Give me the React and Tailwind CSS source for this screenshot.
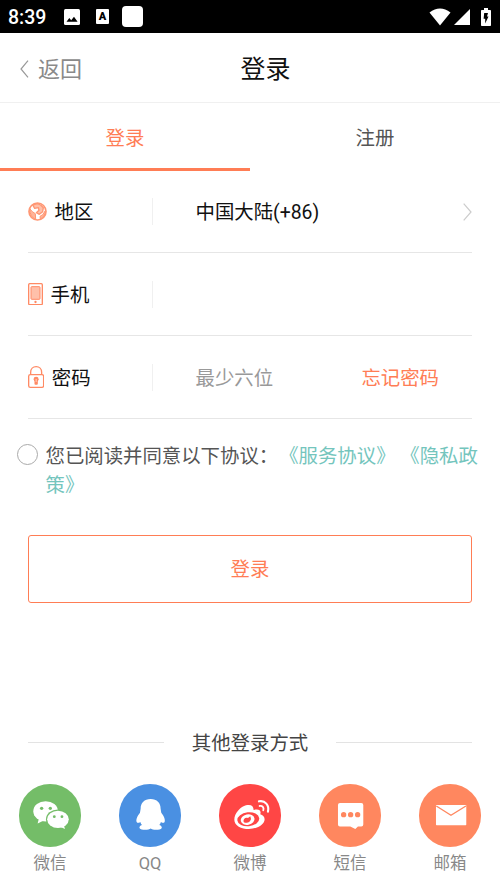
import React, { useState } from 'react';

const WechatIcon = () => (
  <svg viewBox="0 0 188 188" className="w-full h-full">
    <g fill="#fff">
      <ellipse cx="80" cy="82" rx="37" ry="30.5" />
      <path d="M60 103 L56 119 L76 109 Z" />
      <ellipse cx="117" cy="106" rx="36" ry="29.5" fill="#74bd68" />
      <ellipse cx="117" cy="106" rx="32.5" ry="26" />
      <path d="M122 128 L138 135 L134 121 Z" />
    </g>
    <g fill="#74bd68">
      <circle cx="68" cy="73" r="5" />
      <circle cx="94" cy="73" r="5" />
      <circle cx="106" cy="98" r="4.2" />
      <circle cx="129" cy="98" r="4.2" />
    </g>
  </svg>
);

const QQIcon = () => (
  <svg viewBox="0 0 188 188" className="w-full h-full">
    <path
      fill="#fff"
      d="M95 45 C76 45 65 57 65 74 C65 78 63 82 63 86 C56 95 50 106 53 114 C55 118 60 117 64 114 C65 118 67 121 69 123 C63 125 60 129 62 133 C66 139 89 139 95 134 C101 139 124 139 128 133 C130 129 127 125 121 123 C123 121 125 118 126 114 C130 117 135 118 137 114 C140 106 134 95 127 86 C127 82 125 78 125 74 C125 57 114 45 95 45 Z"
    />
  </svg>
);

const WeiboIcon = () => (
  <svg viewBox="0 0 188 188" className="w-full h-full">
    <path
      fill="#fff"
      d="M81 64 C66 67 46 88 46 107 C46 125 67 135 90 135 C116 135 137 121 137 106 C137 98 131 93 124 91 C128 79 119 73 104 78 C104 66 96 60 81 64 Z"
    />
    <ellipse cx="88" cy="106" rx="33" ry="21" fill="#ff4645" transform="rotate(-6 88 106)" />
    <ellipse cx="86" cy="107" rx="21" ry="15.5" fill="#fff" transform="rotate(-12 86 107)" />
    <path d="M74 114 C72 105 79 99 87 102 L94 97 L96 104 C96 113 82 121 74 114 Z" fill="#ff4645" />
    <g fill="none" stroke="#fff" strokeWidth="6.500" strokeLinecap="round">
      <path d="M120 52 C138 48 152 64 147 83" />
      <path d="M122 66 C130 64 136 71 133 79" strokeWidth="5.500" />
    </g>
  </svg>
);

const SmsIcon = () => (
  <svg viewBox="0 0 188 188" className="w-full h-full">
    <path
      fill="#fff"
      d="M63 57 H127 Q133 57 133 63 V122 Q133 128 127 128 H117 L109 135 L94 128 H63 Q57 128 57 122 V63 Q57 57 63 57 Z"
    />
    <g fill="#ff875f">
      <circle cx="74" cy="92" r="8" />
      <circle cx="95" cy="92" r="8" />
      <circle cx="116" cy="92" r="8" />
    </g>
  </svg>
);

const MailIcon = () => (
  <svg viewBox="0 0 188 188" className="w-full h-full">
    <rect x="51" y="63" width="91" height="61" rx="2" fill="#fff" />
    <path d="M52 66 L96 94 L141 66" fill="none" stroke="#ff875f" strokeWidth="4" />
  </svg>
);

const GlobeIcon = () => (
  <svg viewBox="0 0 57 57" className="w-[19px] h-[19px] -mt-[2px]">
    <circle cx="28.5" cy="28.5" r="25.5" fill="#fff" stroke="#ff9673" strokeWidth="5" />
    <path
      fill="#ffc0aa"
      stroke="#ff9673"
      strokeWidth="4"
      strokeLinejoin="round"
      d="M14 9 L20 19 L31 17 L33 25 L25 32 L34 37 L44 29 L46 17 L38 9 L28 5 Z"
    />
    <path fill="#ffb499" stroke="#ff9673" strokeWidth="3" d="M5 20 L13 29 L22 35 L23 52 Q6 46 5 20 Z" />
    <path fill="#ffb499" stroke="#ff9673" strokeWidth="3" d="M52 26 L44 38 L36 43 L37 51 Q51 44 52 26 Z" />
  </svg>
);

const PhoneIcon = () => (
  <svg viewBox="0 0 45 67" className="w-[15px] h-[22.3px] -mt-[2px]">
    <rect x="2" y="2" width="41" height="63" rx="3" fill="#fff" stroke="#ff8a64" strokeWidth="4" />
    <rect x="9" y="11" width="27" height="38" rx="2" fill="#ffc0aa" stroke="#ff8a64" strokeWidth="3" />
    <circle cx="22.5" cy="57" r="3.5" fill="#ff8a64" />
  </svg>
);

const LockIcon = () => (
  <svg viewBox="0 0 49 67" className="w-[16.3px] h-[22.3px] -mt-[2px]">
    <g fill="none" stroke="#ff8a64" strokeWidth="4">
      <path d="M8 26 V19 C8 9 15 2 24.500 2 C34 2 41 9 41 19 V26" />
      <rect x="2" y="26" width="45" height="38" rx="5" />
    </g>
    <circle cx="24.500" cy="40" r="7.500" fill="#ff8a64" />
    <rect x="19.500" y="42" width="10" height="14" rx="3" fill="#ff8a64" />
    <path d="M24.500 39 V48" stroke="#ffd2c3" strokeWidth="3" />
  </svg>
);

const StatusBar = () => (
  <div className="flex items-center h-[33px] bg-black text-white">
    <span className="w-[46px] ml-[8px] pt-[2px] text-[19.5px] leading-none font-['Roboto'] font-medium">8:39</span>
    <svg viewBox="0 0 16 16" className="w-4 h-4 ml-[10px]">
      <rect width="16" height="16" rx="1.5" fill="#fff" />
      <path d="M2.500 12.800 L5.300 9 L7.200 11.200 L10 7.800 L13.600 12.800 Z" fill="#000" />
    </svg>
    <div className="flex justify-center w-[13px] h-[15px] ml-4 rounded-[1px] bg-white text-black text-[11px] leading-[15px] font-black font-['Roboto']">
      A
    </div>
    <div className="w-[21px] h-[21px] ml-[13px] rounded-[4px] bg-white"></div>
    <svg viewBox="0 0 22 18" className="w-[22px] h-[18px] ml-auto">
      <path d="M0.500 4.500 Q11 -3.500 21.500 4.500 L11 17.500 Z" fill="#fff" />
    </svg>
    <svg viewBox="0 0 16 16" className="w-4 h-4 ml-[3px]">
      <path d="M16 0 V16 H0 Z" fill="#fff" />
    </svg>
    <svg viewBox="0 0 10 18" className="w-[10px] h-[18px] ml-[11px] mr-[9px]">
      <path d="M3 0 H7 V2 H9.200 Q10 2 10 2.800 V17.200 Q10 18 9.200 18 H0.800 Q0 18 0 17.200 V2.800 Q0 2 0.800 2 H3 Z" fill="#fff" />
      <path d="M3.200 5 H7 L6 8.500 H7.500 L4.200 15.500 V10.800 H2.600 Z" fill="#000" />
    </svg>
  </div>
);

const FieldRow = ({ icon, label, children }) => (
  <div className="flex items-center h-[83px] pt-[2px] border-b border-[#e6e6e6]">
    <div className="flex items-center w-[124px]">
      {icon}
      <span className="ml-[7.500px] pt-[3px] text-[#111]">{label}</span>
    </div>
    <div className="w-px h-[27px] -mt-[2px] bg-[#f0f0f0]"></div>
    <div className="flex flex-1 items-center justify-between pl-[42.500px]">{children}</div>
  </div>
);

const loginWays = [
  { name: '微信', color: 'bg-[#74bd68]', icon: <WechatIcon /> },
  { name: 'QQ', color: 'bg-[#4a90e2]', icon: <QQIcon /> },
  { name: '微博', color: 'bg-[#ff4645]', icon: <WeiboIcon /> },
  { name: '短信', color: 'bg-[#ff875f]', icon: <SmsIcon /> },
  { name: '邮箱', color: 'bg-[#ff875f]', icon: <MailIcon /> },
];

const App = () => {
  const [agreed, setAgreed] = useState(false);

  return (
    <div className="flex flex-col w-[500px] h-[888px] overflow-hidden bg-white text-[19.4px] leading-[28.5px] font-['Roboto','Noto_Sans_CJK_SC',sans-serif]">
      <StatusBar />

      <header className="grid grid-cols-[240.5px_1fr] items-center h-[70px] pt-[2px] border-b border-[#f0f0f0]">
        <button className="flex items-center pl-[20px] text-[22px] text-[#8a8a8a]">
          <svg viewBox="0 0 9 18" className="w-[9px] h-[18px] mr-[9px]">
            <path d="M8 0.700 L1 9 L8 17.300" fill="none" stroke="#999" strokeWidth="1.200" />
          </svg>
          <span className="pt-[3px]">返回</span>
        </button>
        <h1 className="pt-[4px] text-[25px] text-[#111]">登录</h1>
      </header>

      <div className="grid grid-cols-2 h-[68px] text-center">
        <button className="pt-[7px] border-b-3 border-[#ff7d55] text-[#ff7d55]">登录</button>
        <button className="pt-[7px] border-b-3 border-transparent text-[#555]">注册</button>
      </div>

      <div className="-mt-px px-7">
        <FieldRow icon={<GlobeIcon />} label="地区">
          <span className="pt-[3px] text-[#111]">中国大陆(+86)</span>
          <svg viewBox="0 0 9 18" className="w-[9px] h-[18px]">
            <path d="M0.700 0.700 L8 9 L0.700 17.300" fill="none" stroke="#ccc" strokeWidth="1.200" />
          </svg>
        </FieldRow>
        <FieldRow icon={<PhoneIcon />} label="手机" />
        <FieldRow icon={<LockIcon />} label="密码">
          <span className="pt-[3px] text-[#999]">最少六位</span>
          <span className="mr-[33px] pt-[3px] text-[#ff7d55]">忘记密码</span>
        </FieldRow>
      </div>

      <div className="flex items-start pl-[17px] pt-[21px]">
        <button
          onClick={() => setAgreed(!agreed)}
          className={`w-[21px] h-[21px] mt-[4px] shrink-0 rounded-full border border-[#aaa] ${
            agreed ? 'bg-[#ff7d55]' : 'bg-white'
          }`}
        ></button>
        <p className="w-[450px] mt-[3px] ml-[7.500px] text-[#555] [text-spacing-trim:space-all]">
          您已阅读并同意以下协议：
          <span className="ml-px text-[#74c5bd]">《服务协议》 《隐私政策》</span>
        </p>
      </div>

      <button className="h-[68px] mt-[35px] mx-7 pt-[3px] rounded-[3px] border border-[#ff7d55] text-[#ff7d55]">登录</button>

      <div className="flex items-center justify-between mt-auto px-7 text-[#444]">
        <div className="w-[136px] h-px bg-[#e3e3e3]"></div>
        <span className="-mb-[3px]">其他登录方式</span>
        <div className="w-[136px] h-px bg-[#e3e3e3]"></div>
      </div>

      <div className="grid grid-cols-5 h-[104px] mt-[29px]">
        {loginWays.map((way) => (
          <div key={way.name} className="flex flex-col items-center">
            <div className={`w-[62.600px] h-[62.600px] rounded-full ${way.color}`}>{way.icon}</div>
            <span className="mt-[5px] text-[16.500px] leading-6 text-[#888]">{way.name}</span>
          </div>
        ))}
      </div>
    </div>
  );
};

export default App;
